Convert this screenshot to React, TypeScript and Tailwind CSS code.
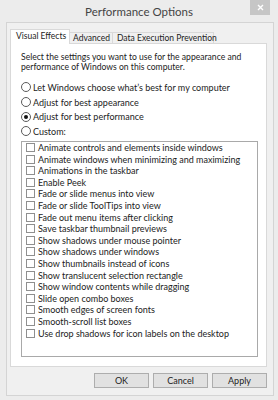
import React from "react";

const items = [
  "Animate controls and elements inside windows",
  "Animate windows when minimizing and maximizing",
  "Animations in the taskbar",
  "Enable Peek",
  "Fade or slide menus into view",
  "Fade or slide ToolTips into view",
  "Fade out menu items after clicking",
  "Save taskbar thumbnail previews",
  "Show shadows under mouse pointer",
  "Show shadows under windows",
  "Show thumbnails instead of icons",
  "Show translucent selection rectangle",
  "Show window contents while dragging",
  "Slide open combo boxes",
  "Smooth edges of screen fonts",
  "Smooth-scroll list boxes",
  "Use drop shadows for icon labels on the desktop",
];

const radios = [
  { label: "Let Windows choose what\u2019s best for my computer", checked: false },
  { label: "Adjust for best appearance", checked: false },
  { label: "Adjust for best performance", checked: true },
  { label: "Custom:", checked: false },
];

function Radio({ checked }: { checked: boolean }) {
  return (
    <span className="w-[10px] h-[10px] rounded-full border border-[#5a5a5a] bg-white flex items-center justify-center shrink-0">
      {checked && <span className="w-[4px] h-[4px] rounded-full bg-[#111]" />}
    </span>
  );
}

export default function App() {
  return (
    <div className="w-[278px] h-[400px] bg-[#ececec] flex flex-col font-['Lato',sans-serif] text-[9px] text-[#222] overflow-hidden whitespace-nowrap">
      <div className="relative h-[22px] flex items-center justify-center">
        <span className="text-[11.5px] text-[#444] leading-none pt-[2px]">Performance Options</span>
        <div className="absolute right-[8px] top-0 w-[20px] h-[15px] bg-[#c6c6c6] flex items-center justify-center">
          <svg width="7" height="7" viewBox="0 0 7 7">
            <path d="M1 1L6 6M6 1L1 6" stroke="#fff" strokeWidth="1.4" />
          </svg>
        </div>
      </div>
      <div className="ml-[6px] mr-[4px] h-[374px] border border-[#d4d4d4] bg-[#f0f0f0] pt-[6px] pl-[3px] pr-[6px] flex flex-col">
        <div className="h-[14px] flex items-end text-[8.5px]">
          <div className="relative z-10 h-[15px] -mb-px w-[60px] border border-b-0 border-[#d9d9d9] bg-white pl-[5px] pt-[1px] leading-[11px]">
            Visual Effects
          </div>
          <div className="h-[11px] w-[43px] border border-l-0 border-b-0 border-[#d9d9d9] bg-[#f0f0f0] pl-[3px] leading-[10px]">
            Advanced
          </div>
          <div className="h-[11px] w-[101px] border border-l-0 border-b-0 border-[#d9d9d9] bg-[#f0f0f0] pl-[4px] leading-[10px]">
            Data Execution Prevention
          </div>
        </div>
        <div className="h-[324px] border border-[#d9d9d9] bg-white pt-[8px] pl-[10px] pr-[8px] flex flex-col">
          <p className="leading-[10px] text-[8.6px]">
            Select the settings you want to use for the appearance and
            <br />
            performance of Windows on this computer.
          </p>
          <div className="mt-[8px] flex flex-col">
            {radios.map((r) => (
              <div key={r.label} className="h-[14.7px] flex items-center gap-[2px]">
                <Radio checked={r.checked} />
                <span className="leading-none">{r.label}</span>
              </div>
            ))}
          </div>
          <div className="mt-[2px] h-[216px] w-[237px] border border-[#a9a9a9] bg-white pl-[4px] flex flex-col">
            {items.map((t) => (
              <div key={t} className="h-[11.6px] flex items-center gap-[3px] shrink-0">
                <span className="w-[9px] h-[9px] border border-[#8f8f8f] bg-white shrink-0" />
                <span className="leading-none">{t}</span>
              </div>
            ))}
          </div>
        </div>
        <div className="mt-[6px] flex justify-end gap-[4px]">
          {["OK", "Cancel", "Apply"].map((b) => (
            <div key={b} className="w-[55px] h-[15px] border border-[#adadad] bg-[#e1e1e1] flex items-center justify-center leading-none">
              {b}
            </div>
          ))}
        </div>
      </div>
    </div>
  );
}
